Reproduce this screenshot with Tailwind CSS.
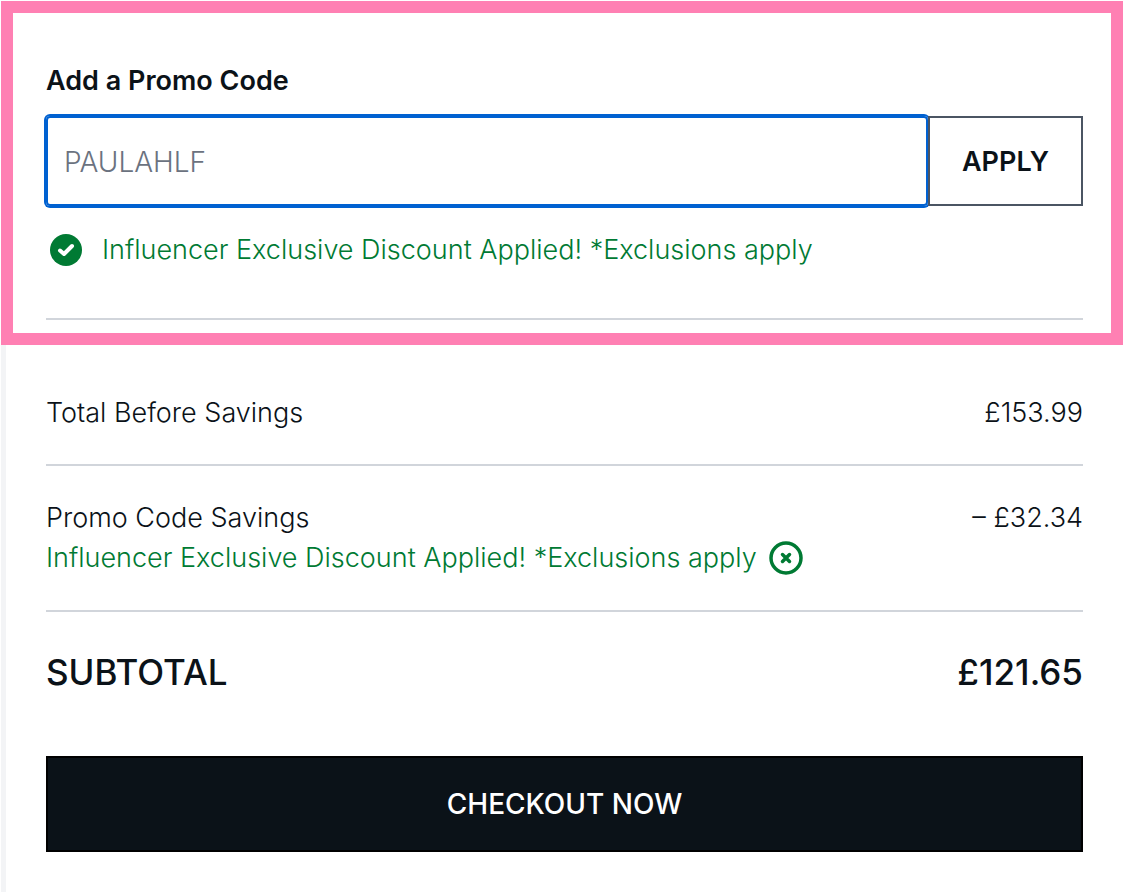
<!DOCTYPE html>
<html lang="en">

<head>
    <meta charset="UTF-8">
    <meta name="viewport" content="width=device-width, initial-scale=1.0">
    <title>Basket Summary</title>
    <script src="https://cdn.jsdelivr.net/npm/@tailwindcss/browser@4"></script>
</head>

<body class="bg-white font-['Inter',sans-serif] text-[27px] leading-10 font-light text-[#0b1218]">
    <main class="flex flex-col min-h-screen px-px pt-px">
        <!-- Promo code -->
        <section class="border-12 border-[#ff80b3] pt-12 pb-[13px] pl-[33px] pr-7">
            <form id="promo-form">
                <label for="promo-code" class="block mb-[15px] font-semibold">Add a Promo Code</label>
                <div class="flex h-[90px]">
                    <input type="text" id="promo-code" name="promo-code" placeholder="PAULAHLF" class="flex-1 min-w-0 px-4 pt-0.5 text-[28px] rounded-sm border-2 border-[#0061d1] ring-2 ring-[#0061d1] outline-none placeholder:text-[#6b7280]">
                    <button type="submit" class="relative w-[155px] pt-0.5 border-2 border-[#4b5563] bg-white font-semibold">APPLY</button>
                </div>
            </form>
            <div class="flex items-center gap-5 mt-6 pl-1 pb-12 border-b-2 border-[#d1d5db] text-[#007a33]">
                <svg class="w-8 h-8 shrink-0" viewBox="0 0 32 32" fill="none">
                    <circle cx="16" cy="16" r="16" fill="#007a33" />
                    <path d="M10 16.500l4 3.500 8-8" stroke="#fff" stroke-width="4" stroke-linecap="round" stroke-linejoin="round" />
                </svg>
                <p>Influencer Exclusive Discount Applied! *Exclusions apply</p>
            </div>
        </section>

        <!-- Totals -->
        <section class="flex-1 border-l-5 border-[#f3f4f6] px-10 pt-12">
            <div class="flex justify-between pb-[31px] border-b-2 border-[#d1d5db]">
                <p>Total Before Savings</p>
                <p>£153.99</p>
            </div>
            <div class="py-8 border-b-2 border-[#d1d5db]">
                <div class="flex justify-between">
                    <p>Promo Code Savings</p>
                    <p>– £32.34</p>
                </div>
                <div class="flex items-center gap-3 text-[#007a33]">
                    <p>Influencer Exclusive Discount Applied! *Exclusions apply</p>
                    <button type="button" aria-label="Remove promo code" class="shrink-0">
                        <svg class="w-[34px] h-[34px]" viewBox="0 0 34 34" fill="none" stroke="#007a33" stroke-linecap="round">
                            <circle cx="17" cy="17" r="15" stroke-width="3.500" />
                            <path d="M13.500 13.500l7 7M20.500 13.500l-7 7" stroke-width="3.500" />
                        </svg>
                    </button>
                </div>
            </div>
            <div class="flex justify-between pt-10 pb-16 text-[35px] font-medium">
                <p>SUBTOTAL</p>
                <p>£121.65</p>
            </div>
            <button type="button" class="block w-full h-24 border-2 border-black bg-[#0b1218] text-white text-[28px] font-medium">CHECKOUT NOW</button>
        </section>
    </main>
</body>

</html>
